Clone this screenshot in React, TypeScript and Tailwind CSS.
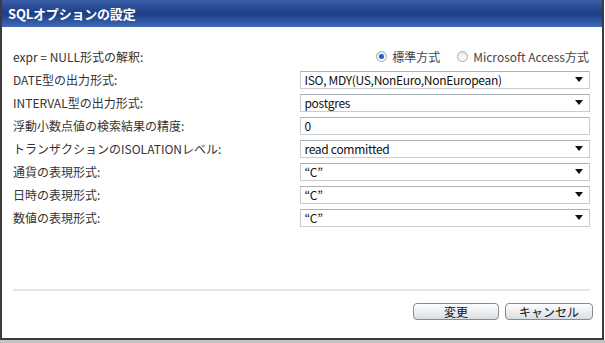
import React from "react";

const ROWS: { label: string; value: string; kind: "select" | "input" }[] = [
  { label: "DATE型の出力形式:", value: "ISO, MDY(US,NonEuro,NonEuropean)", kind: "select" },
  { label: "INTERVAL型の出力形式:", value: "postgres", kind: "select" },
  { label: "浮動小数点値の検索結果の精度:", value: "0", kind: "input" },
  { label: "トランザクションのISOLATIONレベル:", value: "read committed", kind: "select" },
  { label: "通貨の表現形式:", value: "\u201cC\u201d", kind: "select" },
  { label: "日時の表現形式:", value: "\u201cC\u201d", kind: "select" },
  { label: "数値の表現形式:", value: "\u201cC\u201d", kind: "select" },
];

function Radio({ checked }: { checked?: boolean }) {
  return (
    <span className="w-[11px] h-[11px] rounded-full border border-[#a8a8a8] bg-linear-to-b from-[#e8e8e8] to-white flex items-center justify-center">
      {checked && <span className="w-[5px] h-[5px] rounded-full bg-[#1f5fc8]" />}
    </span>
  );
}

function Field({ value, kind }: { value: string; kind: "select" | "input" }) {
  return (
    <div className="h-[18px] w-[290px] border border-[#c8cdd2] border-t-[#a9b0b7] bg-white flex items-center pl-[3px] pr-[6px]">
      <span className="flex-1 text-[12px] text-[#111] leading-none tracking-[-0.3px]">{value}</span>
      {kind === "select" && (
        <svg width="8" height="5" viewBox="0 0 8 5">
          <path d="M0 0h8L4 5z" fill="#111" />
        </svg>
      )}
    </div>
  );
}

export default function App() {
  return (
    <div
      className="w-[605px] h-[343px] bg-white flex flex-col"
      style={{ fontFamily: '"Noto Sans CJK JP", "Liberation Sans", sans-serif' }}
    >
      <div className="w-[604px] h-[340px] border-l-2 border-r-2 border-b-2 border-[#3c3c3c] flex flex-col">
        <div className="h-[27px] bg-linear-to-b from-[#3a5ea8] via-[#1d3d86] to-[#4069b5] flex items-center px-[6px]">
          <span className="text-white text-[13px] font-bold tracking-[-0.2px]">SQLオプションの設定</span>
        </div>

        <div className="flex-1 flex flex-col pt-[18px] pl-[11px] pr-[12px]">
          <div className="h-[23px] flex items-center">
            <span className="flex-1 text-[12px] text-[#333]">expr = NULL形式の解釈:</span>
            <div className="flex items-center gap-[5px] text-[12px] text-[#444] pr-[1px]">
              <Radio checked />
              <span className="mr-[12px]">標準方式</span>
              <Radio />
              <span>Microsoft Access方式</span>
            </div>
          </div>
          {ROWS.map((row) => (
            <div key={row.label} className="h-[23px] flex items-center">
              <span className="w-[288px] text-[12px] text-[#333]">{row.label}</span>
              <Field value={row.value} kind={row.kind} />
            </div>
          ))}
        </div>

        <div className="ml-[11px] mr-[12px] h-[2px] bg-[#e3e7ea]" />
        <div className="h-[47px] flex items-start justify-end gap-[6px] pt-[12px] pr-[9px]">
          <button className="w-[86px] h-[17px] rounded-[4px] border border-[#8a8a8a] bg-linear-to-b from-white to-[#d9dde2] text-[12px] leading-none text-[#111]">
            変更
          </button>
          <button className="w-[88px] h-[17px] rounded-[4px] border border-[#8a8a8a] bg-linear-to-b from-white to-[#d9dde2] text-[12px] leading-none text-[#111]">
            キャンセル
          </button>
        </div>
      </div>
      <div className="flex-1 bg-[#c4c4c4]" />
    </div>
  );
}
